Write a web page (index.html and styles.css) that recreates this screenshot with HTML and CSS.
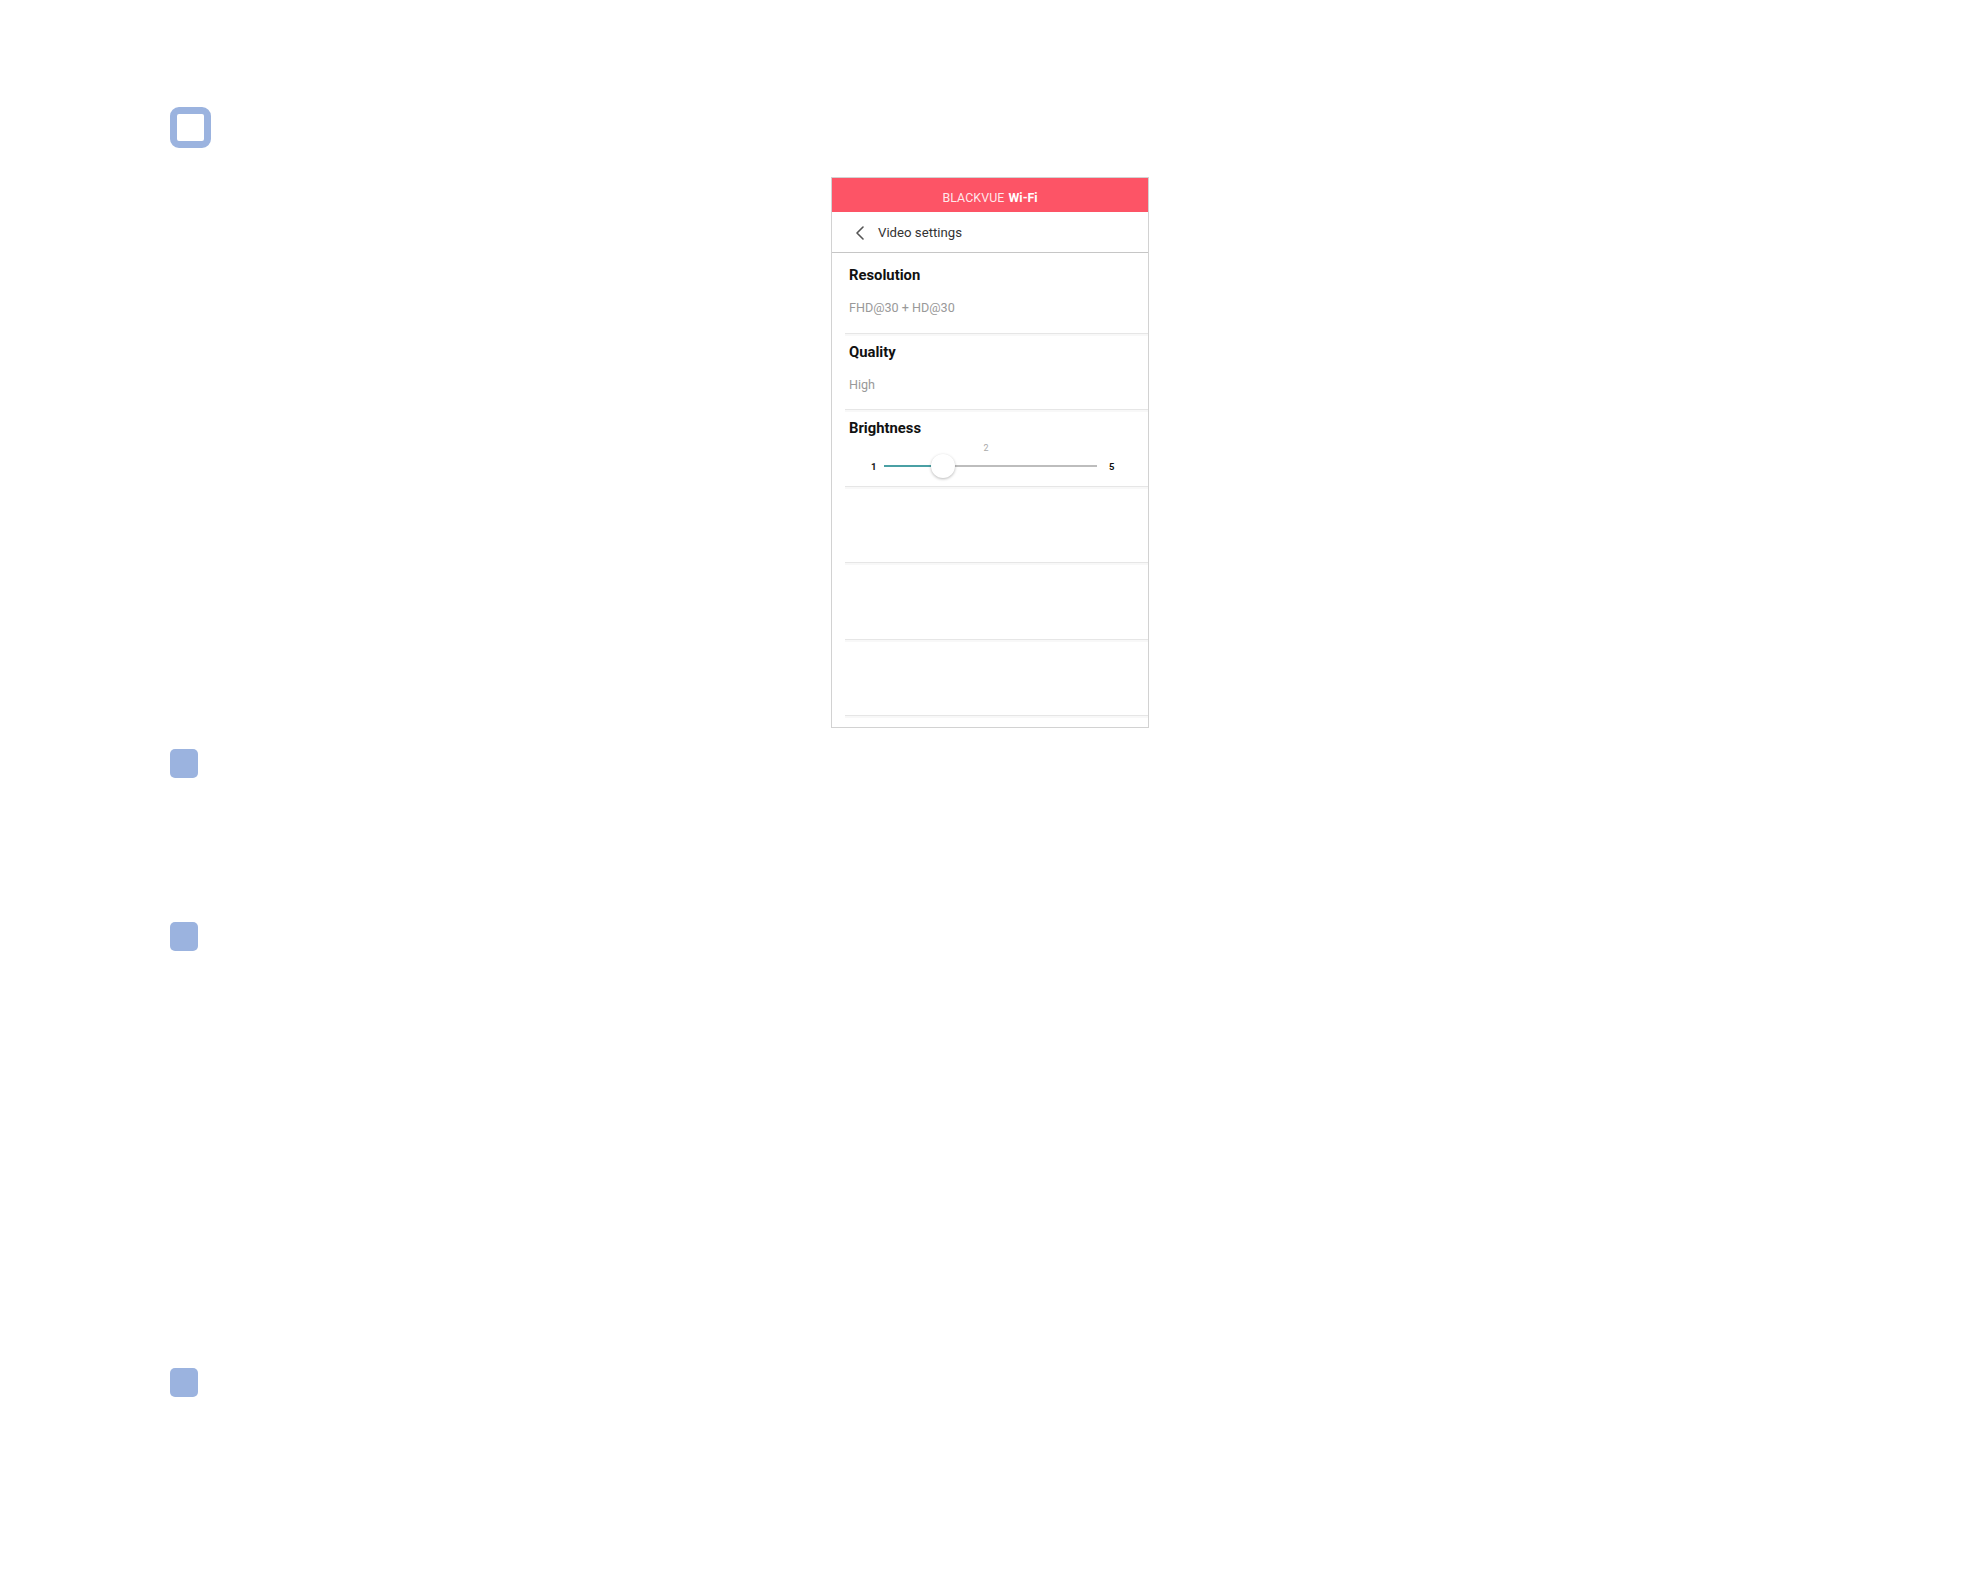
FILE: index.html
```html
<!DOCTYPE html>
<html>
<head>
<meta charset="utf-8">
<link rel="stylesheet" href="styles.css">
</head>
<body>
<div class="page">
  <div class="markers">
    <div class="marker-outline"></div>
    <div class="marker m1"></div>
    <div class="marker m2"></div>
    <div class="marker m3"></div>
  </div>
  <div class="stage">
    <div class="phone">
      <div class="appbar"><span class="brand-light">BLACKVUE</span> <span class="brand-bold">Wi-Fi</span></div>
      <div class="nav">
        <svg class="chev" width="10" height="14" viewBox="0 0 10 14"><polyline points="8,1 2,7 8,13" fill="none" stroke="#555" stroke-width="1.6" stroke-linecap="round" stroke-linejoin="round"/></svg>
        <span class="nav-title">Video settings</span>
      </div>
      <div class="list">
        <div class="row">
          <div class="row-title">Resolution</div>
          <div class="row-value">FHD@30 + HD@30</div>
        </div>
        <div class="row">
          <div class="row-title">Quality</div>
          <div class="row-value">High</div>
        </div>
        <div class="row">
          <div class="row-title">Brightness</div>
          <div class="slider">
            <div class="slider-value">2</div>
            <div class="slider-line">
              <span class="slider-end slider-min">1</span>
              <div class="track">
                <div class="track-fill" style="width: 25%"></div>
                <div class="thumb" style="left: calc(12px + (100% - 24px) * 0.25)"></div>
              </div>
              <span class="slider-end slider-max">5</span>
            </div>
          </div>
        </div>
        <div class="row"></div>
        <div class="row"></div>
        <div class="row"></div>
      </div>
    </div>
  </div>
</div>
</body>
</html>
```
FILE: styles.css
```css
* { box-sizing: border-box; }
html, body { margin: 0; padding: 0; background: #fff; }
body { font-family: Roboto, "Liberation Sans", sans-serif; color: #111; }

.page {
  display: flex;
  padding-left: 170px;
  min-height: 1587px;
}

.markers {
  display: flex;
  flex-direction: column;
  width: 41px;
  padding-top: 107px;
}
.marker-outline {
  width: 41px;
  height: 41px;
  border: 7px solid #9bb3df;
  border-radius: 9px;
}
.marker {
  width: 28px;
  height: 29px;
  background: #9bb3df;
  border-radius: 5px;
}
.m1 { margin-top: 601px; }
.m2 { margin-top: 144px; }
.m3 { margin-top: 417px; }

.stage {
  padding-left: 620px;
  padding-top: 177px;
}

.phone {
  width: 318px;
  height: 551px;
  border: 1px solid #d2d2d2;
  background: #fff;
  overflow: hidden;
}

.appbar {
  height: 34px;
  background: #fd5466;
  color: #fff;
  font-size: 12.4px;
  display: flex;
  align-items: center;
  justify-content: center;
  gap: 4px;
  padding-top: 4px;
}
.brand-light { color: rgba(255,255,255,0.88); font-weight: 400; letter-spacing: 0.1px; }
.brand-bold { font-weight: 700; }

.nav {
  height: 41px;
  border-bottom: 1px solid #c6c6c6;
  display: flex;
  align-items: center;
  padding-left: 23px;
  gap: 13px;
}
.chev { display: block; margin-top: 1px; }
.nav-title { font-size: 13.2px; color: #333; }

.list { padding-top: 4px; }

.row {
  height: 76.5px;
  margin-left: 13px;
  border-bottom: 1px solid #e6e6e6;
  box-shadow: 0 2px 0 #f8f8f8;
  padding: 10px 0 0 4px;
}
.row-title {
  font-size: 14.8px;
  line-height: 16px;
  font-weight: 700;
  color: #111;
}
.row-value {
  margin-top: 18px;
  font-size: 12.6px;
  line-height: 14px;
  color: #999;
}

.slider { padding: 0 0 0 22px; width: 265px; }
.slider-value {
  text-align: center;
  font-size: 9px;
  line-height: 10px;
  color: #aaa;
  margin-top: 7px;
  padding-right: 13px;
}
.slider-line {
  display: flex;
  align-items: center;
  margin-top: 1px;
  height: 24px;
}
.slider-end {
  font-size: 9.5px;
  font-weight: 700;
  color: #111;
  width: 5px;
}
.slider-min { margin-right: 8px; }
.slider-max { margin-left: 12px; }
.track {
  position: relative;
  flex: 1;
  height: 2px;
  background: #bdbdbd;
}
.track-fill {
  height: 2px;
  background: #4aa0a4;
}
.thumb {
  position: absolute;
  top: -11px;
  width: 24px;
  height: 24px;
  margin-left: -12px;
  border-radius: 50%;
  background: #fff;
  box-shadow: 0 1px 3px rgba(0,0,0,0.28);
}
```
